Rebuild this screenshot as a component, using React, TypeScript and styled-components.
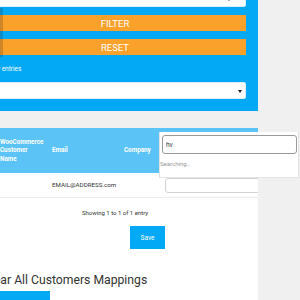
import React from "react";
import styled, { createGlobalStyle } from "styled-components";

const GlobalStyle = createGlobalStyle`
  html, body {
    margin: 0;
    padding: 0;
    background: #f0f0f0;
    font-family: Roboto, "Liberation Sans", sans-serif;
    overflow: hidden;
  }
`;

const App: React.FC = () => {
  return (
    <Page>
      <GlobalStyle />
      <Content>
        <FilterPanel>
          <SelectBox $arrowRight={14} />
          <OrangeButton>FILTER</OrangeButton>
          <OrangeButton>RESET</OrangeButton>
          <PanelLabel>Show entries</PanelLabel>
          <SelectBox $arrowRight={3} />
        </FilterPanel>
        <Card>
          <Table>
            <HeaderRow>
              <Cell />
              <HeadCell>WooCommerce Customer Name</HeadCell>
              <HeadCell>Email</HeadCell>
              <HeadCell>Company</HeadCell>
              <Cell />
            </HeaderRow>
            <BodyRow>
              <Cell />
              <Cell />
              <BodyCell>EMAIL@ADDRESS.com</BodyCell>
              <Cell />
              <Cell>
                <MappingInput />
              </Cell>
            </BodyRow>
          </Table>
          <Showing>Showing 1 to 1 of 1 entry</Showing>
          <SaveRow>
            <BlueButton>Save</BlueButton>
          </SaveRow>
          <Heading>Clear All Customers Mappings</Heading>
          <ClearRow>
            <BlueButton $wide>Clear</BlueButton>
          </ClearRow>
        </Card>
      </Content>
      <Shade />
      <Dropdown>
        <SearchField defaultValue="hv" />
        <Searching>Searching…</Searching>
      </Dropdown>
    </Page>
  );
};

const Page = styled.div`
  position: relative;
  width: 300px;
  height: 300px;
  overflow: hidden;
`;

const Content = styled.div`
  margin: -22px 0 0 -28px;
  width: 286px;
  display: flex;
  flex-direction: column;
`;

const FilterPanel = styled.div`
  background: #03a9f4;
  padding: 12px;
  display: flex;
  flex-direction: column;
  gap: 8px;
`;

const SelectBox = styled.div<{ $arrowRight: number }>`
  position: relative;
  height: 17px;
  box-sizing: border-box;
  background: #fff;
  border: 1px solid #d6eefa;
  border-radius: 2px;

  &::after {
    content: "";
    position: absolute;
    right: ${(p) => p.$arrowRight}px;
    top: 7px;
    border-left: 2px solid transparent;
    border-right: 2px solid transparent;
    border-top: 3px solid #222;
  }
`;

const OrangeButton = styled.button`
  height: 16px;
  border: none;
  padding: 0;
  background: #f9a12b;
  color: #fff;
  font-family: Roboto, "Liberation Sans", sans-serif;
  font-size: 9.5px;
`;

const PanelLabel = styled.div`
  color: #fff;
  font-size: 6.5px;
  line-height: 10px;
  margin-top: 1px;
`;

const Card = styled.div`
  margin-top: 17px;
  background: #fff;
  overflow: hidden;
  display: flex;
  flex-direction: column;
  height: 400px;
`;

const Table = styled.div`
  display: flex;
  flex-direction: column;
`;

const Row = styled.div`
  display: grid;
  grid-template-columns: 28px 52px 72px 41px 1fr;
  align-items: center;
`;

const HeaderRow = styled(Row)`
  height: 45px;
  background: #5bc3f5;
`;

const BodyRow = styled(Row)`
  height: 24px;
  border-bottom: 1px solid #ececec;
`;

const Cell = styled.div`
  min-width: 0;
`;

const HeadCell = styled.div`
  color: #fff;
  font-weight: 700;
  font-size: 6.3px;
  line-height: 8.5px;
  padding-right: 10px;
`;

const BodyCell = styled.div`
  color: #333;
  font-size: 6.2px;
  white-space: nowrap;
`;

const MappingInput = styled.div`
  width: 140px;
  height: 15px;
  box-sizing: border-box;
  border: 1px solid #d4d4d4;
  border-radius: 3px;
  background: #fff;
`;

const Showing = styled.div`
  margin-top: 11px;
  text-align: center;
  color: #333;
  font-size: 6px;
  line-height: 8px;
`;

const SaveRow = styled.div`
  margin-top: 9px;
  padding-left: 158px;
  display: flex;
`;

const BlueButton = styled.button<{ $wide?: boolean }>`
  width: ${(p) => (p.$wide ? 67 : 35)}px;
  height: 23px;
  border: none;
  padding: 0;
  background: #03a9f4;
  color: #fff;
  font-family: Roboto, "Liberation Sans", sans-serif;
  font-size: 6.5px;
`;

const Heading = styled.h2`
  margin: 24px 0 0 11px;
  font-weight: 400;
  font-size: 12.2px;
  line-height: 14px;
  color: #333;
  white-space: nowrap;
`;

const ClearRow = styled.div`
  margin-top: 4px;
  padding-left: 11px;
  display: flex;
`;

const Shade = styled.div`
  position: absolute;
  left: 0;
  top: 8px;
  width: 3px;
  height: 49px;
  background: rgba(40, 30, 20, 0.2);
`;

const Dropdown = styled.div`
  position: absolute;
  left: 159px;
  top: 132px;
  width: 140px;
  height: 46px;
  box-sizing: border-box;
  background: #fff;
  border: 1px solid #e2e2e2;
  border-top: none;
  padding: 3px 1px 0 2px;
  display: flex;
  flex-direction: column;
`;

const SearchField = styled.input`
  width: 100%;
  height: 19px;
  box-sizing: border-box;
  border: 1px solid #9a9a9a;
  border-radius: 3px;
  padding: 0 3px;
  font-family: Roboto, "Liberation Sans", sans-serif;
  font-size: 6.5px;
  color: #333;
  outline: none;
`;

const Searching = styled.div`
  margin: 6px 0 0 -2px;
  color: #999;
  font-size: 6px;
  line-height: 8px;
`;

export default App;
